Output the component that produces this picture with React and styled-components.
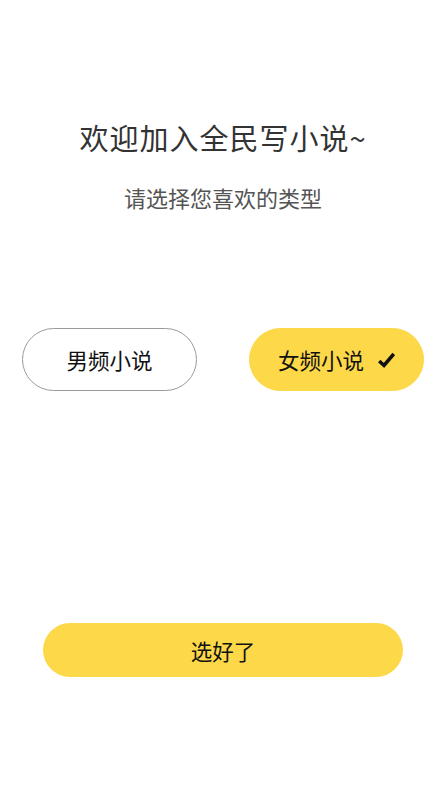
import React, {useState} from 'react';
import styled, {createGlobalStyle} from "styled-components";

const Global = createGlobalStyle`
	html, body { margin: 0; padding: 0; background: #fff; }
	body { font-family: "Noto Sans CJK SC", "Noto Sans", sans-serif; }
`

export default function App(){

	const [choice, setChoice] = useState('female')

	return (
		<Page>
		<Global />
		<Header>
			<Title>欢迎加入全民写小说~</Title>
			<Subtitle>请选择您喜欢的类型</Subtitle>
		</Header>

		<Choices>
			<Choice selected={choice === 'male'} onClick={() => setChoice('male')}>
				男频小说
				{choice === 'male' && <Check />}
			</Choice>
			<Choice selected={choice === 'female'} onClick={() => setChoice('female')}>
				女频小说
				{choice === 'female' && <Check />}
			</Choice>
		</Choices>

		<Confirm>选好了</Confirm>
		</Page>
	)
}

function Check(){
	return (
		<svg width="17" height="18" viewBox="0 0 17 18">
			<path d="M1.2 10 L6 14.5 L15.8 3" fill="none" stroke="#111" strokeWidth="3.6" strokeLinecap="butt" strokeLinejoin="miter" />
		</svg>
	)
}

const Page = styled.div`
	width: 446px;
	height: 793px;
	display: flex;
	flex-direction: column;
	align-items: center;
	background: #fff;
`

const Header = styled.div`
	display: flex;
	flex-direction: column;
	align-items: center;
	padding-top: 115px;
`

const Title = styled.h1`
	margin: 0;
	font-size: 29px;
	font-weight: 400;
	line-height: 44px;
	color: #333;
	letter-spacing: 1px;
`

const Subtitle = styled.p`
	margin: 23px 0 0;
	font-size: 22px;
	line-height: 30px;
	color: #555;
`

const Choices = styled.div`
	width: 100%;
	box-sizing: border-box;
	padding: 0 22px 0 22px;
	margin-top: 116px;
	display: flex;
	justify-content: space-between;
`

const Choice = styled.button`
	width: 175px;
	height: 63px;
	box-sizing: border-box;
	border-radius: 32px;
	border: 1px solid ${p => p.selected ? '#fdd848' : '#9a9a9a'};
	background: ${p => p.selected ? '#fdd848' : '#fff'};
	font-family: inherit;
	font-size: 21.5px;
	color: #111;
	display: flex;
	align-items: center;
	justify-content: center;
	gap: 14px;
	padding: 0;
	cursor: pointer;
`

const Confirm = styled.button`
	margin-top: 232px;
	width: 360px;
	height: 54px;
	border: none;
	border-radius: 27px;
	background: #fdd848;
	font-family: inherit;
	font-size: 21.5px;
	color: #111;
	cursor: pointer;
`
